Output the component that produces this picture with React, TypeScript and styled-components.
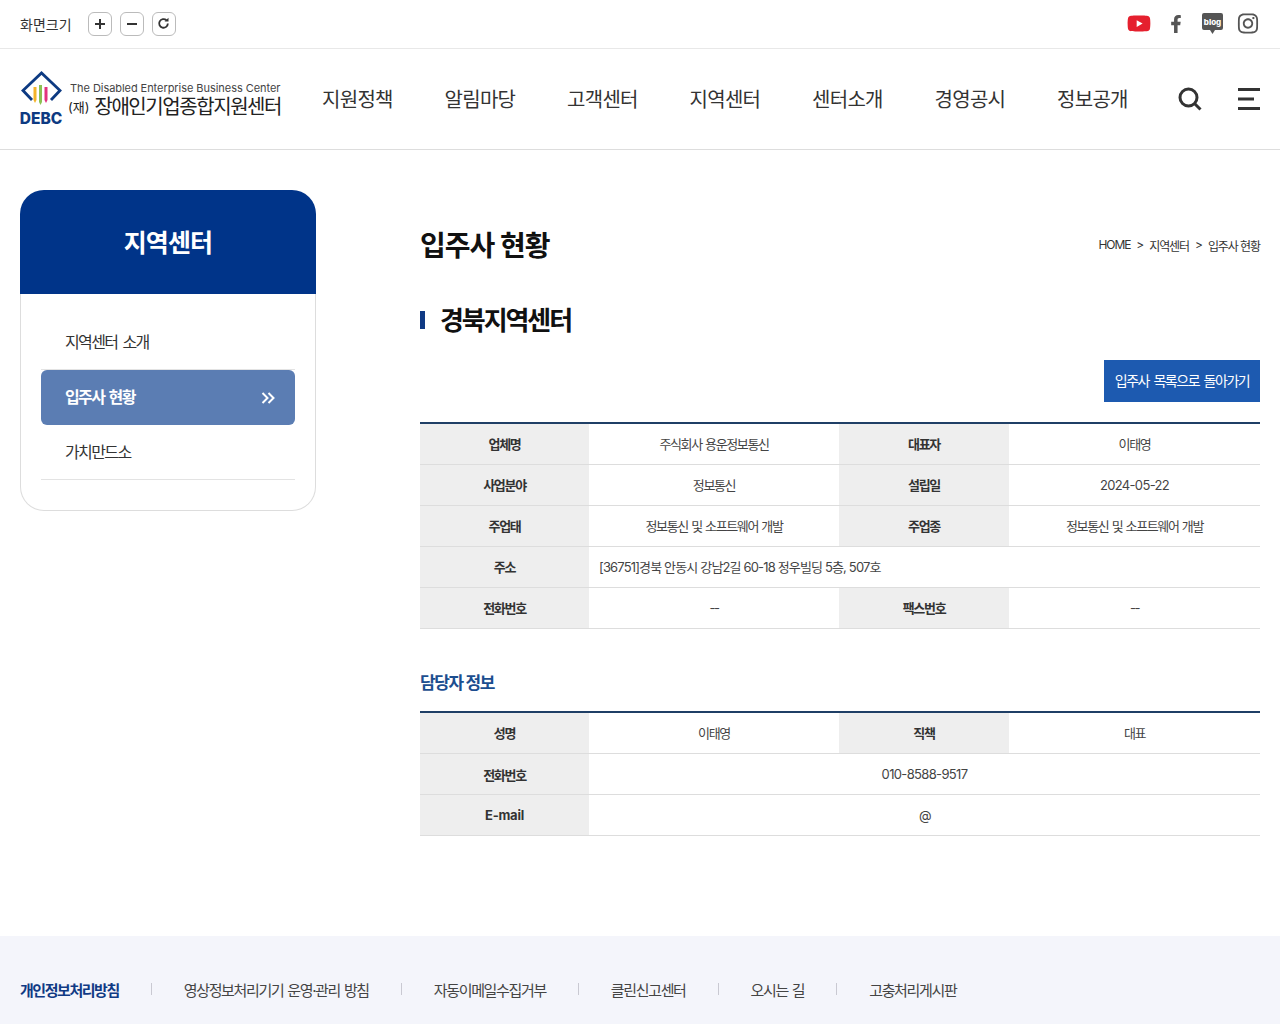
import styled, { createGlobalStyle } from 'styled-components'
import { FaFacebookF, FaInstagram, FaYoutube } from 'react-icons/fa'

const GlobalStyle = createGlobalStyle`
  * { box-sizing: border-box; }
  html, body { margin: 0; padding: 0; background: #fff; }
  body {
    font-family: Inter, 'Noto Sans CJK KR', sans-serif;
    color: #222;
    letter-spacing: -0.05em;
  }
  ul { list-style: none; margin: 0; padding: 0; }
`

const NAV = ['지원정책', '알림마당', '고객센터', '지역센터', '센터소개', '경영공시', '정보공개']
const FOOT = ['개인정보처리방침', '영상정보처리기기 운영·관리 방침', '자동이메일수집거부', '클린신고센터', '오시는 길', '고충처리게시판']

const Page = styled.div`
  width: 1280px;
  height: 1024px;
  display: flex;
  flex-direction: column;
  overflow: hidden;
`
const TopBar = styled.div`
  height: 49px;
  flex: none;
  padding: 0 21px 1px 20px;
  border-bottom: 1px solid #e8e8e8;
  display: flex;
  align-items: center;
  justify-content: space-between;
`
const ZoomBox = styled.div`
  display: flex;
  align-items: center;
  gap: 8px;
`
const ZoomLabel = styled.span`
  font-size: 14px;
  letter-spacing: 0;
  color: #333;
  margin-right: 8px;
`
const ZoomButton = styled.button`
  width: 24px;
  height: 24px;
  padding: 0;
  border: 1px solid #bbb;
  border-radius: 6px;
  background: #fff;
  display: flex;
  align-items: center;
  justify-content: center;
`
const Socials = styled.div`
  display: flex;
  align-items: center;
  gap: 14px;
`
const SocialSlot = styled.span<{ $w: number; $c?: string }>`
  width: ${p => p.$w}px;
  display: flex;
  justify-content: center;
  color: ${p => p.$c || '#555'};
`
const Header = styled.header`
  height: 101px;
  flex: none;
  padding: 0 20px;
  border-bottom: 1px solid #ddd;
  display: flex;
  align-items: center;
`
const Logo = styled.div`
  width: 262px;
  flex: none;
  display: flex;
  align-items: flex-start;
  gap: 6px;
  margin-top: -2px;
`
const LogoMark = styled.div`
  width: 44px;
  flex: none;
  display: flex;
  flex-direction: column;
  align-items: center;
`
const LogoName = styled.span`
  margin-left: -2px;
  font-size: 15.5px;
  line-height: 15px;
  font-weight: 800;
  letter-spacing: 0;
  color: #0d3a82;
`
const LogoText = styled.div`
  padding-top: 11px;
  white-space: nowrap;
`
const LogoEn = styled.div`
  font-size: 11px;
  line-height: 13px;
  letter-spacing: -0.005em;
  color: #444;
`
const LogoKo = styled.div`
  margin-top: 2px;
  font-size: 20px;
  line-height: 20px;
  letter-spacing: -0.072em;
  color: #222;
`
const LogoJae = styled.span`
  font-size: 13px;
  letter-spacing: 0;
  margin: 0 5px 0 -2px;
  vertical-align: 2px;
`
const Nav = styled.nav`
  margin-left: 40px;
  padding-top: 2px;
  display: flex;
  gap: 51px;
`
const NavItem = styled.a`
  font-size: 20px;
  line-height: 28px;
  letter-spacing: -0.035em;
  color: #333;
  width: 71.5px;
  white-space: nowrap;
`
const HeaderTools = styled.div`
  margin-left: auto;
  display: flex;
  align-items: center;
  gap: 36px;
`
const Body = styled.div`
  flex: 1;
  padding: 40px 20px 0;
  display: flex;
  align-items: flex-start;
`
const Side = styled.aside`
  width: 296px;
  flex: none;
`
const SideTitle = styled.h2`
  margin: 0;
  height: 104px;
  padding-bottom: 3px;
  background: #003489;
  color: #fff;
  font-size: 25px;
  font-weight: 700;
  letter-spacing: -0.035em;
  display: flex;
  align-items: center;
  justify-content: center;
  border-radius: 24px 24px 0 0;
`
const SideList = styled.ul`
  height: 217px;
  padding: 21px 20px 0;
  border: 1px solid #ddd;
  border-top: 0;
  border-radius: 0 0 24px 24px;
`
const SideItem = styled.li<{ $on?: boolean; $line?: boolean }>`
  height: 55px;
  padding: 0 20px 3px 24px;
  display: flex;
  align-items: center;
  justify-content: space-between;
  font-size: 16px;
  letter-spacing: -0.1em;
  word-spacing: 2px;
  font-weight: ${p => (p.$on ? 700 : 400)};
  color: ${p => (p.$on ? '#fff' : '#333')};
  background: ${p => (p.$on ? '#5b7db3' : 'transparent')};
  border-radius: ${p => (p.$on ? 6 : 0)}px;
  border-bottom: ${p => (p.$line ? '1px solid #e3e3e3' : 'none')};
`
const Chevron = styled.svg`
  margin-top: 4px;
`
const Content = styled.main`
  margin-left: 104px;
  width: 840px;
`
const TitleRow = styled.div`
  height: 52px;
  margin-top: 28px;
  display: flex;
  align-items: center;
  justify-content: space-between;
`
const PageTitle = styled.h1`
  margin: 0;
  font-size: 28px;
  font-weight: 700;
  letter-spacing: -0.035em;
  color: #111;
`
const Crumbs = styled.div`
  display: flex;
  gap: 6px;
  font-size: 12px;
  letter-spacing: -0.09em;
  color: #333;
  margin-top: 3px;
`
const SectionTitle = styled.h3`
  margin: 33px 0 0;
  height: 36px;
  padding-left: 20px;
  font-size: 26px;
  line-height: 36px;
  font-weight: 700;
  letter-spacing: -0.08em;
  color: #111;
  position: relative;
  &::before {
    content: '';
    position: absolute;
    left: 0;
    top: 8px;
    width: 5px;
    height: 18px;
    background: #103a84;
  }
`
const ButtonRow = styled.div`
  margin-top: 21px;
  display: flex;
  justify-content: flex-end;
`
const BackButton = styled.a`
  width: 156px;
  height: 42px;
  padding-bottom: 3px;
  background: #1d5ab0;
  color: #fff;
  font-size: 14px;
  letter-spacing: -0.105em;
  word-spacing: 2px;
  display: flex;
  align-items: center;
  justify-content: center;
`
const Table = styled.table<{ $top: number }>`
  width: 840px;
  margin-top: ${p => p.$top}px;
  border-collapse: collapse;
  table-layout: fixed;
  border-top: 2px solid #1f3f66;
`
const Th = styled.th<{ $h?: number; $latin?: boolean }>`
  height: ${p => p.$h || 41}px;
  padding: 0;
  background: #eeeeee;
  border-bottom: 1px solid #ddd;
  font-size: 13px;
  font-weight: 700;
  letter-spacing: ${p => (p.$latin ? '-0.02em' : '-0.1em')};
  color: #333;
`
const Td = styled.td<{ $left?: boolean; $num?: boolean }>`
  height: 41px;
  padding: ${p => (p.$left ? '0 10px' : '0')};
  border-bottom: 1px solid #ddd;
  font-size: 13px;
  letter-spacing: ${p => (p.$num ? '-0.05em' : p.$left ? '-0.065em' : '-0.105em')};
  word-spacing: ${p => (p.$left ? 0 : 1)}px;
  color: #444;
  text-align: ${p => (p.$left ? 'left' : 'center')};
`
const SubTitle = styled.h4`
  margin: 42px 0 0;
  font-size: 17px;
  line-height: 24px;
  font-weight: 700;
  letter-spacing: -0.08em;
  color: #1c4e8f;
`
const Footer = styled.footer`
  height: 88px;
  flex: none;
  background: #f4f5fb;
  padding: 18px 20px 0;
  display: flex;
  align-items: center;
`
const FootLink = styled.a<{ $strong?: boolean }>`
  font-size: 15px;
  letter-spacing: ${p => (p.$strong ? '-0.097em' : '-0.09em')};
  word-spacing: 1px;
  font-weight: ${p => (p.$strong ? 700 : 400)};
  color: ${p => (p.$strong ? '#103a84' : '#444')};
  display: flex;
  align-items: center;
  white-space: nowrap;
  &:not(:last-child)::after {
    content: '';
    width: 1px;
    height: 12px;
    background: #c9c9d2;
    margin: 0 32px;
  }
`

const Cols = () => (
  <colgroup>
    <col width={169} />
    <col width={250} />
    <col width={170} />
    <col width={251} />
  </colgroup>
)

const LogoIcon = () => (
  <svg width="44" height="40" viewBox="0 0 44 40">
    <path d="M12 29 L3 19.500 L21.500 2 L40 19.500 L31 29" fill="none" stroke="#0d3a82" strokeWidth="2.800" />
    <path d="M13.500 16v13l1.500 3 1.500-3V16z" fill="#f4b32a" />
    <path d="M19 14v17l1.500 3 1.500-3V14z" fill="#8cc152" />
    <path d="M24.500 16v13l1.500 3 1.500-3V16z" fill="#e2337e" />
  </svg>
)

const BlogIcon = () => (
  <svg width="21" height="21" viewBox="0 0 21 21">
    <path d="M2 0h17a2 2 0 0 1 2 2v13a2 2 0 0 1-2 2h-6l-2.500 4-2.500-4H2a2 2 0 0 1-2-2V2a2 2 0 0 1 2-2z" fill="#555" />
    <text x="10.500" y="11.500" textAnchor="middle" fill="#fff" fontSize="8" fontWeight="800" letterSpacing="0" fontFamily="Inter, sans-serif">blog</text>
  </svg>
)

export default function App() {
  return (
    <Page>
      <GlobalStyle />
      <TopBar>
        <ZoomBox>
          <ZoomLabel>화면크기</ZoomLabel>
          <ZoomButton>
            <svg width="12" height="12" viewBox="0 0 12 12"><path d="M6 1v10M1 6h10" stroke="#333" strokeWidth="2" /></svg>
          </ZoomButton>
          <ZoomButton>
            <svg width="12" height="12" viewBox="0 0 12 12"><path d="M1 6h10" stroke="#333" strokeWidth="2" /></svg>
          </ZoomButton>
          <ZoomButton>
            <svg width="13" height="13" viewBox="0 0 12 12">
              <path d="M10 6a4 4 0 1 1-1.300-3" fill="none" stroke="#333" strokeWidth="1.700" />
              <path d="M10.600 0.600v3.600H7z" fill="#333" />
            </svg>
          </ZoomButton>
        </ZoomBox>
        <Socials>
          <SocialSlot $w={24} $c="#e5202e"><FaYoutube size={25} /></SocialSlot>
          <SocialSlot $w={22}><FaFacebookF size={18} /></SocialSlot>
          <SocialSlot $w={22}><BlogIcon /></SocialSlot>
          <SocialSlot $w={22}><FaInstagram size={23} /></SocialSlot>
        </Socials>
      </TopBar>
      <Header>
        <Logo>
          <LogoMark>
            <LogoIcon />
            <LogoName>DEBC</LogoName>
          </LogoMark>
          <LogoText>
            <LogoEn>The Disabled Enterprise Business Center</LogoEn>
            <LogoKo><LogoJae>(재)</LogoJae>장애인기업종합지원센터</LogoKo>
          </LogoText>
        </Logo>
        <Nav>
          {NAV.map(n => <NavItem key={n}>{n}</NavItem>)}
        </Nav>
        <HeaderTools>
          <svg width="24" height="24" viewBox="0 0 24 24">
            <circle cx="10.500" cy="10.500" r="8.500" fill="none" stroke="#333" strokeWidth="3" />
            <path d="M16.500 16.500l6 6" stroke="#333" strokeWidth="3" />
          </svg>
          <svg width="22" height="22" viewBox="0 0 22 22">
            <path d="M0 1.500h22M0 11h16M0 20.500h22" stroke="#333" strokeWidth="3" />
          </svg>
        </HeaderTools>
      </Header>
      <Body>
        <Side>
          <SideTitle>지역센터</SideTitle>
          <SideList>
            <SideItem $line>지역센터 소개</SideItem>
            <SideItem $on>
              입주사 현황
              <Chevron width="14" height="12" viewBox="0 0 14 12">
                <path d="M1.500 1l5 5-5 5M7.500 1l5 5-5 5" fill="none" stroke="#fff" strokeWidth="2" />
              </Chevron>
            </SideItem>
            <SideItem $line>가치만드소</SideItem>
          </SideList>
        </Side>
        <Content>
          <TitleRow>
            <PageTitle>입주사 현황</PageTitle>
            <Crumbs>
              <span>HOME</span><span>&gt;</span><span>지역센터</span><span>&gt;</span><span>입주사 현황</span>
            </Crumbs>
          </TitleRow>
          <SectionTitle>경북지역센터</SectionTitle>
          <ButtonRow><BackButton>입주사 목록으로 돌아가기</BackButton></ButtonRow>
          <Table $top={20}>
            <Cols />
            <tbody>
              <tr><Th>업체명</Th><Td>주식회사 용운정보통신</Td><Th>대표자</Th><Td>이태영</Td></tr>
              <tr><Th>사업분야</Th><Td>정보통신</Td><Th>설립일</Th><Td $num>2024-05-22</Td></tr>
              <tr><Th>주업태</Th><Td>정보통신 및 소프트웨어 개발</Td><Th>주업종</Th><Td>정보통신 및 소프트웨어 개발</Td></tr>
              <tr><Th>주소</Th><Td $left colSpan={3}>[36751]경북 안동시 강남2길 60-18 정우빌딩 5층, 507호</Td></tr>
              <tr><Th>전화번호</Th><Td>--</Td><Th>팩스번호</Th><Td>--</Td></tr>
            </tbody>
          </Table>
          <SubTitle>담당자 정보</SubTitle>
          <Table $top={16}>
            <Cols />
            <tbody>
              <tr><Th $h={42}>성명</Th><Td>이태영</Td><Th $h={42}>직책</Th><Td>대표</Td></tr>
              <tr><Th>전화번호</Th><Td $num colSpan={3}>010-8588-9517</Td></tr>
              <tr><Th $latin>E-mail</Th><Td colSpan={3}>@</Td></tr>
            </tbody>
          </Table>
        </Content>
      </Body>
      <Footer>
        {FOOT.map((f, i) => <FootLink key={f} $strong={i === 0}>{f}</FootLink>)}
      </Footer>
    </Page>
  )
}
